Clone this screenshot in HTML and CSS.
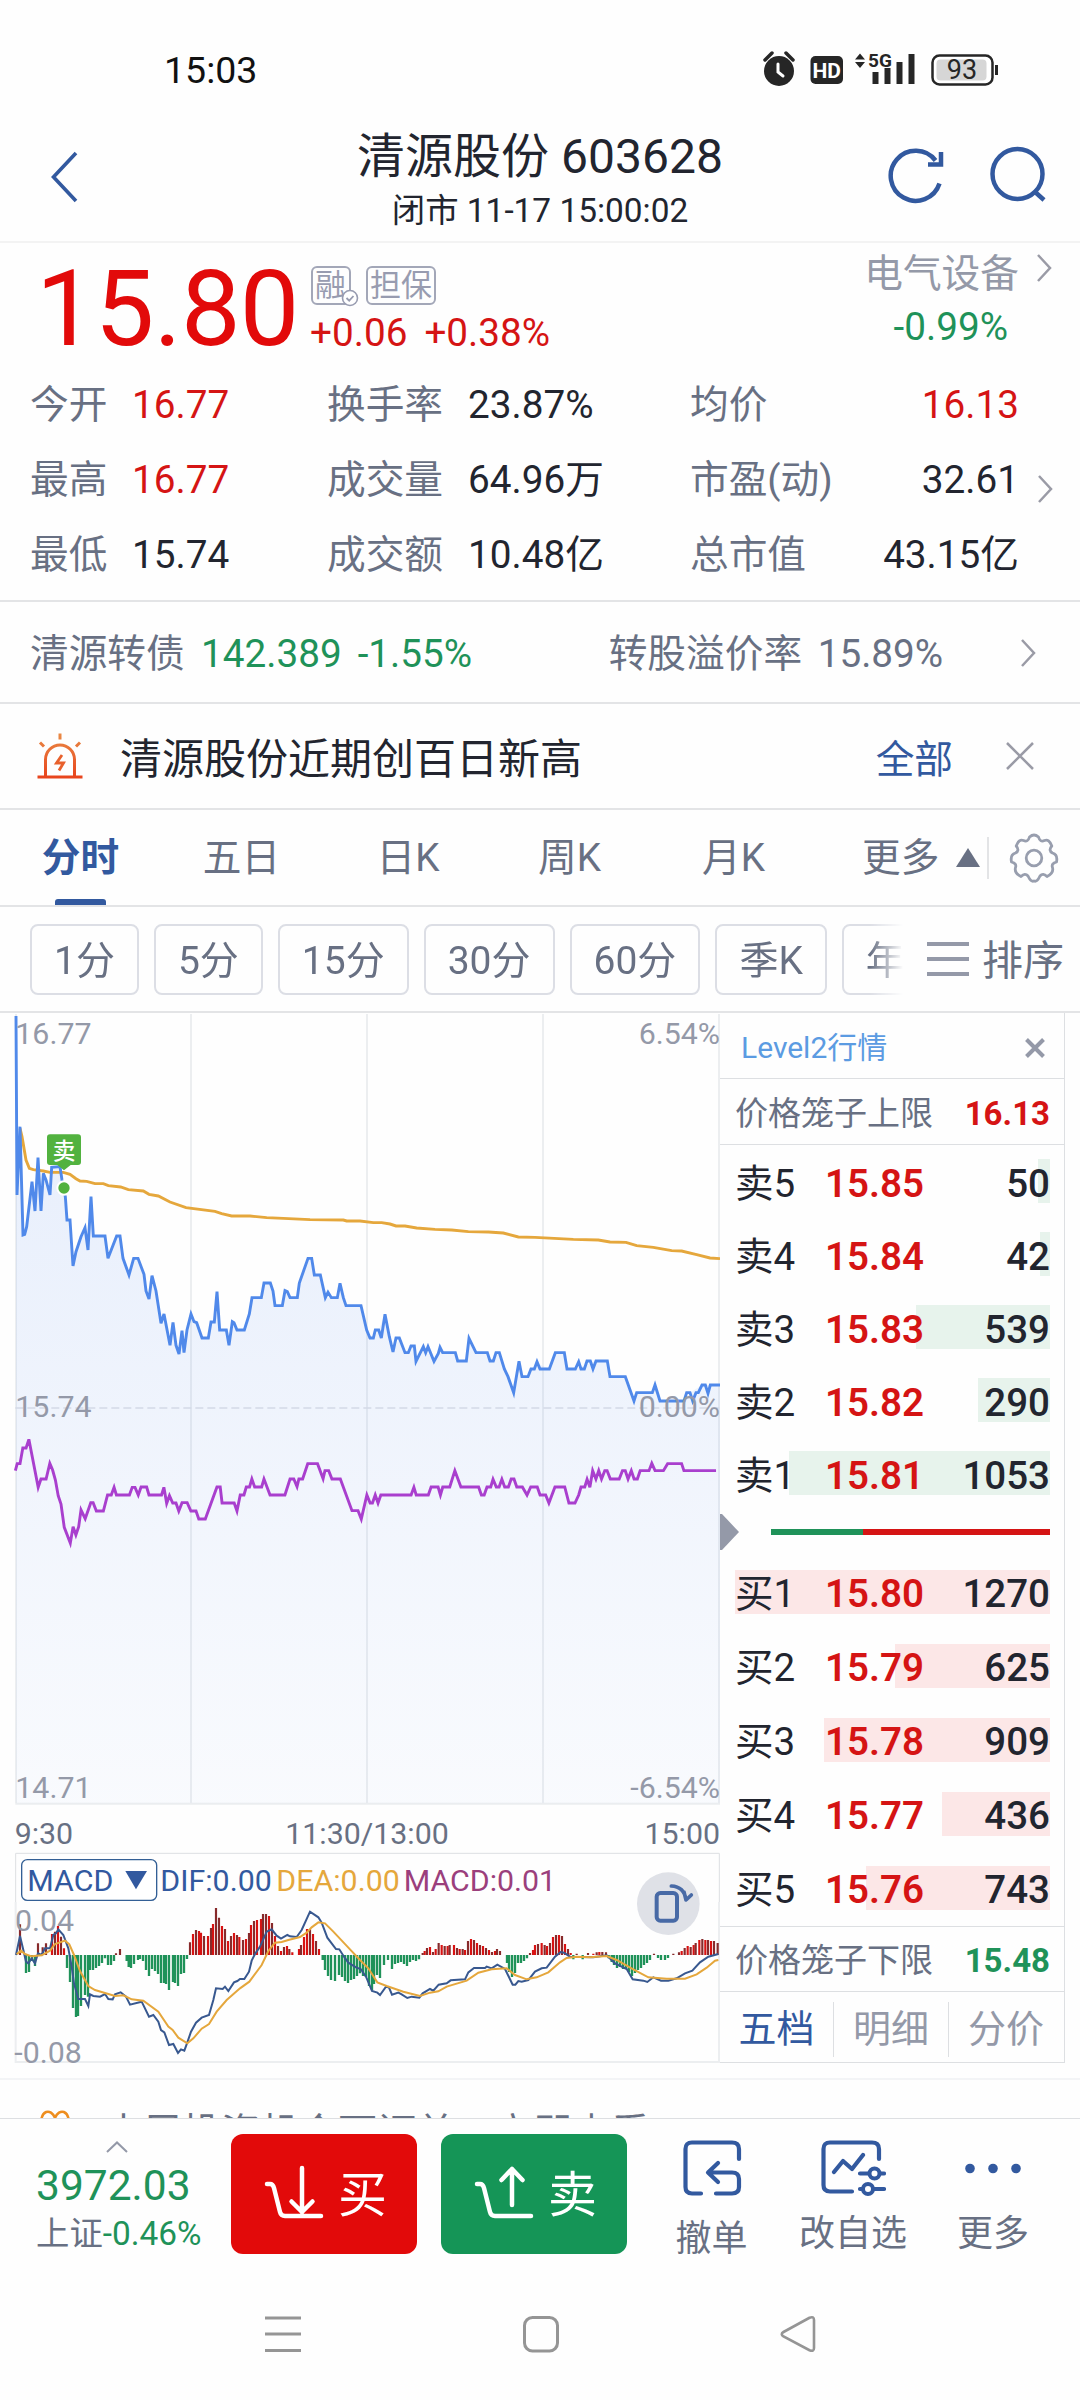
FILE: index.html
```html
<!DOCTYPE html>
<html lang="zh-CN">
<head>
<meta charset="utf-8">
<title>清源股份 603628</title>
<link rel="stylesheet" href="styles.css">
</head>
<body>
<div class="status">
  <span class="clock">15:03</span>
  <svg class="status-icons" viewBox="763 50 236 38" width="236" height="38">
    <circle cx="779" cy="71" r="15" fill="#262626"/>
    <path d="M765 60l7-7M793 60l-7-7" stroke="#262626" stroke-width="3.5" stroke-linecap="round"/>
    <path d="M778 64v8l5 4" stroke="#fff" stroke-width="3" fill="none" stroke-linecap="round"/>
    <rect x="810.500" y="56" width="32.500" height="28" rx="5" fill="#262626"/>
    <text x="826.800" y="77.500" class="hd">HD</text>
    <path d="M855 59.500l5-6 5 6zM855 62l5 6 5-6z" fill="#262626"/>
    <text x="868" y="67" class="fiveg">5G</text>
    <path d="M875.500 72v12M887.500 68v16M899.500 62v22M911.500 54v30" stroke="#262626" stroke-width="6"/>
    <rect x="932.500" y="55.500" width="60" height="29" rx="7" fill="#fff" stroke="#262626" stroke-width="2.500"/>
    <rect x="936.500" y="59.500" width="50" height="21" rx="4" fill="#d6d6d6"/>
    <path d="M996.500 65v10" stroke="#262626" stroke-width="3"/>
    <text x="962" y="79" class="batt">93</text>
  </svg>
</div>

<header class="header">
  <svg class="back" viewBox="0 0 32 54" width="32" height="54"><path d="M27 3L4.500 27L27 51" fill="none" stroke="#32599f" stroke-width="3.600"/></svg>
  <div class="titles">
    <h1>清源股份 603628</h1>
    <p>闭市 11-17 15:00:02</p>
  </div>
  <div class="actions">
    <svg viewBox="0 0 60 60" width="60" height="60"><path d="M53.500 38.500A25 25 0 1 1 49.500 15.500M55 7V19.500H42" fill="none" stroke="#32599f" stroke-width="4.500"/></svg>
    <svg viewBox="0 0 60 60" width="60" height="60"><circle cx="29.500" cy="29" r="25" fill="none" stroke="#32599f" stroke-width="4.500"/><path d="M46 46l10 9" stroke="#32599f" stroke-width="4.500"/></svg>
  </div>
</header>

<section class="quote">
  <div class="price">15.80</div>
  <div class="change">
    <div class="tags">
      <span class="tag margin">融<svg viewBox="0 0 18 18" width="18" height="18"><circle cx="9" cy="9" r="7.500" fill="#fff" stroke="#989cb0" stroke-width="1.600"/><path d="M5.500 9l2.700 2.700L12.500 7" fill="none" stroke="#989cb0" stroke-width="1.800"/></svg></span>
      <span class="tag">担保</span>
    </div>
    <div class="delta"><span>+0.06</span><span>+0.38%</span></div>
  </div>
  <div class="industry">
    <div class="name">电气设备</div>
    <div class="green">-0.99%</div>
  </div>
  <svg class="chev" viewBox="0 0 16 28" width="16" height="28"><path d="M2 1l12 13L2 27" fill="none" stroke="#9a9ba6" stroke-width="2.500"/></svg>
</section>

<section class="stats">
  <dl>
    <dt>今开</dt><dd class="red">16.77</dd><dt>换手率</dt><dd>23.87%</dd><dt>均价</dt><dd class="red end">16.13</dd>
    <dt>最高</dt><dd class="red">16.77</dd><dt>成交量</dt><dd>64.96万</dd><dt>市盈(动)</dt><dd class="end">32.61</dd>
    <dt>最低</dt><dd>15.74</dd><dt>成交额</dt><dd>10.48亿</dd><dt>总市值</dt><dd class="end">43.15亿</dd>
  </dl>
  <svg class="chev" viewBox="0 0 16 28" width="16" height="28"><path d="M2 1l12 13L2 27" fill="none" stroke="#9a9ba6" stroke-width="2.500"/></svg>
</section>

<section class="bond">
  <span class="bond-name">清源转债</span><span class="green">142.389</span><span class="green bond-pct">-1.55%</span>
  <span class="premium">转股溢价率</span><span>15.89%</span>
  <svg class="chev" viewBox="0 0 16 28" width="16" height="28"><path d="M2 1l12 13L2 27" fill="none" stroke="#9a9ba6" stroke-width="2.500"/></svg>
</section>

<section class="alert">
  <svg viewBox="0 0 48 48" width="48" height="48">
    <defs><linearGradient id="siren" x1="0" y1="0" x2="0" y2="1"><stop offset="0" stop-color="#e98a45"/><stop offset="1" stop-color="#e8451d"/></linearGradient></defs>
    <path d="M9.500 45V27.500a14.500 14.500 0 0 1 29 0V45M1.500 45h45M24 1.500v6M4 10.500l4 4M44 10.500l-4 4" fill="none" stroke="url(#siren)" stroke-width="3"/>
    <path d="M26 23l-5.500 8h7L23 38.500" fill="none" stroke="#e8602c" stroke-width="2.800"/>
  </svg>
  <span class="alert-text">清源股份近期创百日新高</span>
  <span class="all">全部</span>
  <svg viewBox="0 0 30 30" width="30" height="30"><path d="M2 2l26 26M28 2L2 28" stroke="#9a9ba6" stroke-width="2.500"/></svg>
</section>

<nav class="tabs">
  <span class="tab on">分时</span><span class="tab">五日</span><span class="tab">日K</span><span class="tab">周K</span><span class="tab month">月K</span>
  <span class="tab more">更多<i></i></span>
  <svg viewBox="-25 -25 50 50" width="50" height="50"><g fill="none" stroke="#989eae" stroke-width="2.800" stroke-linejoin="round"><circle r="7.800"/><path d="M-4.500-21Q0-25 4.500-21Q6-15.500 10.500-17.500Q15-19.500 17.800-12Q14-7.500 18.500-5Q24-3.500 22.500 4Q17 5.500 18.500 9.500Q20 15 13 18.500Q9 14.500 6 18Q3 24.500 0 23Q-3 24.500-6 18Q-9 14.500-13 18.500Q-20 15-18.500 9.500Q-17 5.500-22.500 4Q-24-3.500-18.500-5Q-14-7.500-17.800-12Q-15-19.500-10.500-17.500Q-6-15.500-4.500-21Z"/></g></svg>
</nav>

<div class="periods">
  <div class="chips"><span>1分</span><span>5分</span><span>15分</span><span>30分</span><span>60分</span><span>季K</span><span>年K</span></div>
  <div class="sort"><i></i>排序</div>
</div>

<main class="board">
  <svg class="chart" viewBox="0 39 2160 3201" width="720" height="1067">
    <defs><linearGradient id="area" gradientUnits="userSpaceOnUse" x1="0" y1="500" x2="0" y2="2410"><stop offset="0" stop-color="#4f86ee" stop-opacity=".12"/><stop offset="1" stop-color="#4f86ee" stop-opacity=".03"/></linearGradient></defs>
    <g fill="none" stroke="#eceef0" stroke-width="6">
      <path d="M48 42V2410M573 42V2410M1101 42V2410M1629 42V2410M2157 42V2410M46 2411H2160"/>
      <path d="M47 2706V3186H2157V2706"/>
      <path d="M47 2706V2560H2158V2706" stroke="#dddfe2" stroke-width="3"/>
    </g>
    <path class="fill" fill="url(#area)" d="M48 48L51 585L60 380L69 705L80 680L96 545L105 633L114 473L123 633L130 520L150 585L155 502L180 500L201 660L210 660L219 798L228 755L255 683L264 750L273 590L280 708L315 708L324 775L350 708L360 708L369 775L387 825L401 775L414 775L432 823L447 897L456 827L483 970L492 942L510 1036L519 967L537 1062L546 992L552 1058L573 942L606 1014L625 1014L633 966L643 966L651 875L659 990L679 990L687 1036L697 965L711 990L733 990L748 942L756 893L784 893L792 849L811 849L825 917L847 917L858 873L870 893L892 893L898 849L924 775L935 775L943 825L961 825L976 893L1012 893L1020 850L1038 917L1083 917L1110 1014L1120 1014L1136 990L1155 943L1179 1056L1198 1014L1215 1058L1243 1038L1248 1084L1270 1040L1302 1084L1320 1042L1328 1058L1366 1058L1373 1083L1399 1083L1407 1015L1428 1058L1462 1058L1470 1083L1498 1058L1541 1178L1557 1084L1566 1130L1584 1130L1611 1090L1648 1107L1666 1058L1693 1058L1701 1107L1726 1107L1788 1083L1822 1083L1830 1130L1876 1130L1902 1203L1910 1178L1957 1178L1965 1155L1980 1203L2052 1203L2070 1178L2106 1155L2160 1155V2410H48Z"/>
    <path d="M46 1224H2160" stroke="#d3d9e6" stroke-width="5" stroke-dasharray="24 12"/>
    <polyline class="line" stroke="#e5a73c" points="60,385 66,410 78,480 88,505 100,509 130,513 150,517 190,517 210,523 228,536 240,543 260,544 285,551 310,551 325,557 362,561 385,569 430,573 447,583 475,588 510,606 558,623 645,634 665,641 695,648 750,648 800,653 850,655 930,659 1030,660 1040,663 1080,663 1120,668 1145,668 1170,672 1188,678 1215,678 1250,684 1305,688 1355,690 1405,695 1465,696 1510,699 1555,711 1605,712 1720,718 1795,720 1830,726 1878,727 1910,737 1960,742 2015,752 2045,753 2090,764 2130,774 2160,776"/>
    <polyline class="line" stroke="#5089ea" points="48,48 51,585 60,380 69,705 74,703 80,680 96,545 105,633 114,473 123,633 130,520 138,540 150,585 155,502 180,500 186,540 196,590 201,660 210,660 219,798 228,755 243,710 255,683 264,750 273,590 280,708 315,708 324,775 350,708 360,708 369,775 387,825 401,775 414,775 432,823 438,873 447,897 456,827 468,873 483,970 492,942 510,1036 519,967 528,1036 537,1062 546,992 552,1058 561,990 573,942 582,965 590,968 606,1014 625,1014 633,966 643,966 651,875 659,990 679,990 687,1036 697,965 702,968 711,990 733,990 748,942 756,893 784,893 792,849 811,849 819,873 825,917 847,917 855,872 862,875 870,893 892,893 898,849 924,775 935,775 943,825 961,825 976,893 984,877 994,893 1012,893 1020,850 1030,893 1038,917 1083,917 1100,990 1110,1014 1120,1014 1126,990 1136,990 1144,1014 1155,943 1168,1010 1179,1056 1188,1014 1198,1014 1215,1058 1225,1058 1233,1038 1243,1038 1248,1084 1270,1040 1277,1058 1284,1040 1302,1084 1315,1060 1320,1042 1328,1058 1366,1058 1373,1083 1399,1083 1407,1015 1428,1058 1462,1058 1470,1083 1480,1083 1488,1058 1498,1058 1513,1107 1524,1130 1541,1178 1557,1084 1566,1130 1584,1130 1593,1107 1603,1107 1611,1085 1620,1107 1648,1107 1666,1058 1693,1058 1701,1107 1726,1107 1736,1085 1743,1107 1753,1107 1761,1083 1771,1083 1779,1107 1788,1083 1822,1083 1830,1130 1876,1130 1902,1203 1910,1178 1957,1178 1965,1155 1980,1203 2052,1203 2060,1178 2070,1178 2078,1203 2088,1178 2095,1178 2106,1155 2116,1155 2124,1180 2131,1155 2160,1155"/>
    <g transform="translate(0 1200) scale(1.3967 1)">
      <polyline class="line" stroke="#a93fce" points="33,212 37,191 43,191 49,144 56,144 62,118 82,262 88,237 99,237 107,190 113,210 119,240 125,287 131,312 138,382 151,429 157,380 163,405 169,380 174,330 183,356 195,308 200,308 207,333 222,333 231,285 239,285 245,262 250,285 278,285 284,262 290,262 297,285 303,261 315,261 320,285 347,285 352,262 358,310 364,287 371,309 378,309 384,333 391,308 402,308 410,333 421,333 427,357 441,357 466,261 473,261 477,309 503,309 509,333 516,285 524,285 529,261 536,261 541,237 547,261 562,261 567,237 580,285 612,285 623,237 631,237 638,260 642,237 650,237 661,191 682,191 694,236 698,212 706,212 713,237 731,237 756,332 769,332 776,357 788,285 795,309 800,309 806,285 812,309 818,285 883,285 889,262 894,285 920,285 926,261 941,261 946,285 951,261 966,261 977,212 990,261 1028,261 1034,285 1040,285 1046,261 1054,261 1059,238 1066,261 1072,261 1078,238 1084,261 1092,261 1098,237 1104,237 1110,261 1122,261 1132,285 1140,261 1154,261 1160,285 1172,285 1179,309 1192,261 1213,261 1222,309 1235,309 1243,285 1248,261 1256,261 1261,238 1267,262 1273,212 1280,237 1286,212 1292,237 1299,212 1304,212 1311,237 1330,237 1337,212 1343,212 1349,237 1356,212 1362,237 1369,237 1375,212 1394,212 1400,190 1407,212 1425,212 1434,191 1464,191 1469,212 1538,212"/>
    </g>
    <circle cx="192" cy="564" r="20" fill="#52b23f" stroke="#fff" stroke-width="6"/>
    <path d="M150 403H234Q243 403 243 412V486Q243 495 234 495H212L192 511L172 495H150Q141 495 141 486V412Q141 403 150 403Z" fill="#52b23f"/>
    <text x="192" y="476" class="mark">卖</text>
    <g class="scale"><text x="46" y="132">16.77</text><text x="46" y="1250">15.74</text><text x="46" y="2394">14.71</text></g>
    <g class="scale right"><text x="2160" y="132">6.54%</text><text x="2160" y="1250">0.00%</text><text x="2160" y="2394">-6.54%</text></g>
    <g class="time"><text x="44" y="2532">9:30</text><text x="1101" y="2532" text-anchor="middle">11:30/13:00</text><text x="2160" y="2532" text-anchor="end">15:00</text></g>

    <g class="macd">
      <rect x="65" y="2579" width="405" height="122" rx="17" fill="#fff" stroke="#335f95" stroke-width="4"/>
      <text x="82" y="2673" fill="#32599f">MACD</text>
      <path d="M376 2613H441L408 2668Z" fill="#32599f"/>
      <text x="481" y="2673" fill="#32599f">DIF:0.00</text>
      <text x="829" y="2673" fill="#e5a73c">DEA:0.00</text>
      <text x="1211" y="2673" fill="#9b3f7c">MACD:0.01</text>
    </g>
    <g transform="translate(0 2400)" fill="none" stroke-width="6.500">
      <path stroke="#d81212" d="M156 465V402M174 465V378M192 465V445M579 465V402M597 465V393M603 465V398M624 465V408M639 465V372M666 465V378M684 465V423M702 465V399M718 465V411M738 465V417M753 465V375M771 465V360M783 465V357M807 465V348M825 465V408M843 465V453M861 465V438M877 465V457M897 465V447M912 465V411M921 465V387M939 465V402M957 465V447M1274 465V453M1290 465V441M1307 465V447M1325 465V435M1343 465V438M1362 465V435M1379 465V447M1395 465V450M1413 465V417M1431 465V429M1449 465V438M1467 465V450M1485 465V453M1599 465V450M1605 465V435M1625 465V429M1641 465V438M1659 465V411M1677 465V405M1695 465V432M1712 465V459M1780 465V461M1798 465V456M2045 465V453M2063 465V438M2081 465V435M2098 465V420M2116 465V420M2133 465V423"/>
      <path stroke="#872a2b" d="M60 465V373M114 465V430M128 465V442M138 465V430M165 465V395M183 465V410M348 465V460M360 465V447M570 465V427M588 465V390M612 465V408M633 465V384M648 465V324M657 465V353M675 465V387M693 465V408M711 465V405M729 465V420M747 465V399M762 465V363M789 465V342M798 465V342M816 465V369M834 465V438M852 465V441M868 465V447M903 465V435M930 465V387M948 465V423M1268 465V459M1281 465V444M1299 465V456M1316 465V429M1334 465V438M1349 465V435M1371 465V444M1388 465V447M1404 465V423M1422 465V420M1440 465V435M1458 465V444M1476 465V456M1491 465V447M1500 465V453M1590 465V459M1614 465V432M1634 465V435M1650 465V429M1668 465V405M1686 465V408M1704 465V447M1730 465V461M1764 465V459M1790 465V457M1807 465V456M1818 465V457M1962 465V461M2020 465V461M2037 465V457M2054 465V444M2072 465V441M2087 465V429M2107 465V417M2124 465V420M2142 465V423M2153 465V429"/>
      <path stroke="#1f9259" stroke-width="7" d="M78 465V519M87 465V516M96 465V483M105 465V498M201 465V504M210 465V546M219 465V624M228 465V651M234 465V648M243 465V618M255 465V585M264 465V590M270 465V510M279 465V510M288 465V504M297 465V498M306 465V489M315 465V475M324 465V495M333 465V495M342 465V483M380 465V483M386 465V501M393 465V504M402 465V492M414 465V480M420 465V477M429 465V483M438 465V510M447 465V528M456 465V507M465 465V513M474 465V522M483 465V549M492 465V549M498 465V552M507 465V570M519 465V546M525 465V549M534 465V558M543 465V522M552 465V519M561 465V477M968 465V480M975 465V510M984 465V528M993 465V540M1005 465V543M1017 465V525M1026 465V531M1035 465V543M1044 465V549M1053 465V540M1062 465V537M1071 465V528M1080 465V520M1089 465V528M1098 465V531M1107 465V558M1116 465V570M1122 465V552M1131 465V525M1140 465V534M1152 465V495M1164 465V480M1176 465V507M1185 465V492M1194 465V489M1203 465V486M1212 465V492M1221 465V498M1230 465V486M1239 465V480M1248 465V483M1257 465V478M1521 465V489M1527 465V516M1536 465V531M1545 465V519M1554 465V489M1563 465V489M1572 465V483M1581 465V475M1720 465V478M1748 465V478M1826 465V475M1835 465V486M1842 465V495M1851 465V504M1860 465V501M1869 465V507M1878 465V507M1887 465V516M1896 465V528M1905 465V519M1914 465V510M1923 465V504M1932 465V495M1941 465V489M1950 465V480M1974 465V474M1983 465V480M1995 465V480M2004 465V474"/>
      <polyline class="thin" stroke="#38588f" points="48,465 60,408 70,450 78,485 85,490 95,475 105,490 114,460 125,465 135,445 150,445 160,405 168,400 175,388 190,405 205,445 215,500 222,550 235,597 255,597 265,618 270,583 280,588 300,590 315,582 325,597 338,598 345,583 362,577 378,590 390,614 425,605 447,650 460,645 475,665 483,690 493,697 507,735 520,732 534,759 543,748 553,752 561,730 573,695 588,668 605,653 627,645 640,600 648,565 668,567 675,560 685,573 702,547 712,543 720,537 733,537 747,515 755,482 765,462 780,440 800,395 815,388 830,407 843,416 862,405 870,409 890,411 905,390 930,335 955,352 965,368 982,413 1008,447 1018,448 1032,470 1045,488 1068,502 1082,507 1098,530 1116,573 1132,578 1140,585 1158,560 1167,563 1176,584 1195,578 1205,583 1222,594 1235,590 1258,593 1268,580 1290,567 1300,572 1316,554 1340,550 1352,541 1395,538 1405,517 1422,504 1455,504 1460,500 1475,505 1492,494 1515,507 1538,554 1546,554 1555,543 1565,545 1585,540 1605,515 1625,505 1640,503 1665,470 1682,456 1692,458 1710,470 1780,472 1820,466 1845,490 1880,507 1898,538 1930,542 1942,546 1960,532 1983,542 2005,542 2030,535 2055,520 2077,512 2100,487 2125,470 2155,462"/>
      <polyline class="thin" stroke="#e5a73c" points="50,463 63,452 75,462 95,469 125,466 150,452 165,432 195,422 208,433 222,465 240,513 265,558 285,570 345,588 370,586 395,598 430,602 475,635 505,680 518,690 535,713 562,730 580,715 605,686 627,672 650,635 680,600 720,565 748,545 785,495 805,453 825,428 845,426 865,420 900,411 920,398 935,382 955,367 975,370 1000,395 1050,448 1080,480 1105,505 1132,547 1160,558 1210,575 1260,588 1290,578 1315,574 1340,560 1400,542 1435,518 1475,508 1520,505 1545,525 1580,538 1610,532 1645,517 1680,487 1700,474 1730,470 1770,472 1820,468 1850,480 1900,508 1945,532 2000,536 2055,536 2090,523 2120,503 2145,482 2155,480"/>
    </g>
    <g class="scale"><text x="45" y="2792">0.04</text><text x="43" y="3188">-0.08</text></g>
    <g transform="translate(1080 2400)">
      <circle cx="925" cy="311" r="94" fill="#dfe1e7"/>
      <rect x="890" y="279" width="61" height="83" rx="11" fill="none" stroke="#486aa6" stroke-width="12"/>
      <path d="M934 258C958 259 974 272 978 299M972 276L978 300L994 285" fill="none" stroke="#486aa6" stroke-width="11" stroke-linecap="round" stroke-linejoin="round"/>
    </g>
  </svg>

  <aside class="book">
    <div class="level2">Level2行情<svg viewBox="0 0 20 20" width="20" height="20"><path d="M1.500 1.500l17 17M18.500 1.500l-17 17" stroke="#9499a8" stroke-width="4"/></svg></div>
    <div class="cage"><span>价格笼子上限</span><b class="red">16.13</b></div>
    <ul class="sell">
      <li><i style="width:12px"></i><span>卖5</span><b>15.85</b><em>50</em></li>
      <li><i style="width:10px"></i><span>卖4</span><b>15.84</b><em>42</em></li>
      <li><i style="width:134px"></i><span>卖3</span><b>15.83</b><em>539</em></li>
      <li><i style="width:72px"></i><span>卖2</span><b>15.82</b><em>290</em></li>
      <li><i style="width:261px"></i><span>卖1</span><b>15.81</b><em>1053</em></li>
    </ul>
    <div class="ratio"><svg viewBox="0 0 20 38" width="20" height="38"><path d="M0 1h2L19 19L2 37H0z" fill="#9499a8"/></svg><span></span></div>
    <ul class="buy">
      <li><i style="width:315px"></i><span>买1</span><b>15.80</b><em>1270</em></li>
      <li><i style="width:155px"></i><span>买2</span><b>15.79</b><em>625</em></li>
      <li><i style="width:226px"></i><span>买3</span><b>15.78</b><em>909</em></li>
      <li><i style="width:108px"></i><span>买4</span><b>15.77</b><em>436</em></li>
      <li><i style="width:184px"></i><span>买5</span><b>15.76</b><em>743</em></li>
    </ul>
    <div class="cage low"><span>价格笼子下限</span><b class="green">15.48</b></div>
    <div class="modes"><span class="on">五档</span><span>明细</span><span>分价</span></div>
  </aside>
</main>

<div class="promo">
  <svg viewBox="0 0 32 20" width="32" height="20"><path d="M2 18C1 0 12-1 16 9C20-1 31 0 30 18" fill="none" stroke="#ee8e1f" stroke-width="2.500"/></svg>
  <span>本周投资机会可订单，立即查看</span>
</div>

<footer class="bar">
  <div class="index">
    <svg viewBox="0 0 22 12" width="22" height="12"><path d="M1 11L11 1.500L21 11" fill="none" stroke="#9499a8" stroke-width="2"/></svg>
    <div class="idx">3972.03</div>
    <div class="idx-sub">上证<span class="green">-0.46%</span></div>
  </div>
  <div class="btn btn-buy"><svg viewBox="0 0 60 54" width="60" height="54"><path d="M3 19h3q3 0 4 4l6 24q1 4 5 4h36M38 3v44M27.500 36.500L38 47L48.500 36.500" fill="none" stroke="#fff" stroke-width="4.500" stroke-linecap="round" stroke-linejoin="round"/></svg><span>买</span></div>
  <div class="btn btn-sell"><svg viewBox="0 0 60 54" width="60" height="54"><path d="M3 19h3q3 0 4 4l6 24q1 4 5 4h36M38 40V4M27.500 15L38 4L48.500 15" fill="none" stroke="#fff" stroke-width="4.500" stroke-linecap="round" stroke-linejoin="round"/></svg><span>卖</span></div>
  <div class="act act-cancel">
    <svg viewBox="0 0 60 58" width="60" height="58"><path d="M57 20V10Q57 3.500 50 3.500H10Q3.500 3.500 3.500 10V48Q3.500 54.500 10 54.500H19M34 54.500H50Q57 54.500 57 48V40Q57 33.500 50 33.500H28M36 24L26 33.500L36 43" fill="none" stroke="#32599f" stroke-width="4.200" stroke-linecap="round" stroke-linejoin="round"/></svg>
    <span>撤单</span>
  </div>
  <div class="act">
    <svg viewBox="0 0 66 58" width="66" height="58"><path d="M59 20V10Q59 3.500 52 3.500H10Q3.500 3.500 3.500 10V46Q3.500 52.500 10 52.500H32M14 33L23 22L32 30L43 16M40 34.500H64M40 50H64" fill="none" stroke="#32599f" stroke-width="4.200" stroke-linecap="round" stroke-linejoin="round"/><circle cx="54.500" cy="34.500" r="5" fill="#fff" stroke="#32599f" stroke-width="4"/><circle cx="48" cy="50" r="5" fill="#fff" stroke="#32599f" stroke-width="4"/></svg>
    <span>改自选</span>
  </div>
  <div class="act">
    <svg viewBox="0 0 60 58" width="60" height="58"><g fill="#32599f"><circle cx="7" cy="29.500" r="4.800"/><circle cx="30" cy="29.500" r="4.800"/><circle cx="53" cy="29.500" r="4.800"/></g></svg>
    <span>更多</span>
  </div>
</footer>

<div class="sysnav">
  <svg viewBox="0 0 36 38" width="36" height="38"><path d="M0 3h36M0 19h36M0 35.500h36" stroke="#959595" stroke-width="3"/></svg>
  <svg viewBox="0 0 36 38" width="36" height="38"><rect x="1.500" y="2.500" width="33" height="33.500" rx="8" fill="none" stroke="#959595" stroke-width="3"/></svg>
  <svg viewBox="0 0 36 38" width="36" height="38"><path d="M3.500 17L29.500 2.800Q34 1 34 5V33Q34 37 29.500 35.200L3.500 21.500Q0 19 3.500 17Z" fill="none" stroke="#959595" stroke-width="2.600"/></svg>
</div>
</body>
</html>
```
FILE: styles.css
```css
* { box-sizing: border-box; margin: 0; padding: 0; }
body {
  width: 1080px; height: 2400px; overflow: hidden; background: #fefefe; color: #22252f;
  font: 38.700px/1 Roboto, "Noto Sans CJK SC", sans-serif; white-space: nowrap;
  display: flex; flex-direction: column;
}
svg { display: block; flex: none; }
ul { list-style: none; }
i, em { font-style: normal; }
.red { color: #d51414; }
.green { color: #1f9259; }

.status { height: 92px; flex: none; padding: 48px 81px 0 164px; display: flex; justify-content: space-between; align-items: flex-start; }
.clock { font-size: 37.500px; line-height: 44px; color: #111; }
.status-icons { margin-top: 2px; }
.hd { font: 700 21px Roboto, sans-serif; fill: #fff; text-anchor: middle; }
.fiveg { font: 700 19px Roboto, sans-serif; fill: #262626; }
.batt { font: 27px Roboto, sans-serif; fill: #262626; text-anchor: middle; }

.header { height: 151px; flex: none; border-bottom: 2px solid #f3f3f3; display: grid; grid-template-columns: 240px 1fr 240px; }
.back { margin: 58px 0 0 49px; }
.titles { text-align: center; padding-top: 34px; }
.titles h1 { font-size: 48px; font-weight: 400; line-height: 62px; }
.titles p { font-size: 33.400px; line-height: 46px; }
.actions { display: flex; gap: 42px; padding: 53px 0 0 46px; }

.quote { height: 124px; flex: none; display: flex; padding-left: 36px; }
.price { width: 274px; font-size: 106px; line-height: 133px; color: #e20a0a; letter-spacing: -.7px; }
.change { flex: 1; padding-top: 23px; }
.tags { display: flex; gap: 15px; padding-left: 1px; }
.tag { height: 39px; border: 2px solid #a3a7b8; border-radius: 6px; padding: 0 2px; font-size: 31px; line-height: 35px; color: #989cb0; }
.tag.margin { position: relative; width: 40px; }
.tag.margin svg { position: absolute; right: -10px; bottom: -4px; }
.delta { display: flex; gap: 17px; line-height: 44px; margin-top: 6px; color: #d51414; }
.industry { text-align: right; padding-top: 9px; width: 160px; }
.industry .name { line-height: 44px; color: #9499a8; }
.industry .green { line-height: 44px; margin-top: 9px; padding-right: 11px; }
.quote .chev { margin: 11px 28px 0 17px; }

.stats { height: 235px; flex: none; border-bottom: 2px solid #e3e4e6; display: flex; align-items: flex-start; }
.stats dl { display: grid; grid-template-columns: 102px 195px 141px 222px 160px 169px; grid-auto-rows: 75px; padding: 0 0 0 30px; line-height: 75px; }
.stats dt { color: #687083; }
.stats dd.end { text-align: right; }
.stats .chev { margin: 108px 0 0 18px; }

.bond { height: 102px; flex: none; border-bottom: 2px solid #e3e4e6; display: flex; align-items: center; padding: 4px 0 0 30px; color: #687083; line-height: 96px; }
.bond-name { width: 171px; }
.bond-pct { margin-left: 16px; width: 251px; }
.premium { width: 209px; }
.bond .chev { margin-left: auto; margin-right: 44px; margin-top: -3px; }

.alert { height: 106px; flex: none; border-bottom: 2px solid #e3e4e6; display: flex; align-items: center; padding: 0 45px 0 36px; }
.alert-text { margin-left: 36px; flex: 1; font-size: 42px; padding-top: 8px; }
.all { color: #32599f; margin-right: 52px; padding-top: 8px; }

.tabs { height: 97px; flex: none; border-bottom: 2px solid #e3e4e6; display: grid; grid-template-columns: 161px 161px 172px 151px 163px 181px 50px; align-items: center; color: #687083; line-height: 96px; }
.tab { text-align: center; height: 95px; }
.tab.on { color: #32599f; font-weight: 700; position: relative; }
.tab.on::after { content: ""; position: absolute; left: 55px; bottom: 0; width: 51px; height: 6px; border-radius: 3px 3px 0 0; background: #32599f; }
.tab.month { padding-left: 14px; }
.tab.more { display: flex; align-items: center; padding-left: 54px; position: relative; }
.tab.more i { margin-left: 17px; border: 12px solid transparent; border-top: 0; border-bottom: 19px solid #687083; }
.tab.more::after { content: ""; position: absolute; right: 0; top: 27px; height: 42px; width: 2px; background: #e3e4e6; }
.tabs svg { margin-left: 20px; }

.periods { height: 106px; flex: none; border-bottom: 2px solid #e3e4e6; display: flex; align-items: center; color: #687083; }
.chips { width: 905px; padding-left: 30px; display: flex; gap: 15px; overflow: hidden; font-size: 39px; -webkit-mask-image: linear-gradient(90deg, #000 870px, transparent 903px); mask-image: linear-gradient(90deg, #000 870px, transparent 903px); }
.chips span { flex: none; height: 71px; line-height: 71px; border: 2px solid #dcdee5; border-radius: 8px; padding: 0 22px; }
.sort { display: flex; align-items: center; margin-left: 22px; font-size: 41px; line-height: 52px; padding-top: 3px; }
.sort i { width: 42px; height: 34px; border: solid #9499a8; border-width: 4px 0; margin: -3px 13px 0 0; background: linear-gradient(#9499a8, #9499a8) 0 50% / 100% 4px no-repeat; }

.board { height: 1067px; flex: none; border-bottom: 2px solid #f3f4f6; display: flex; }
.line { fill: none; stroke-width: 2.900px; vector-effect: non-scaling-stroke; stroke-linejoin: miter; }
.thin { stroke-width: 6px; }
.scale, .time, .macd { font: 91px Roboto, sans-serif; }
.scale { fill: #9499a8; }
.scale.right { text-anchor: end; }
.time { fill: #687083; }
.mark { font: 500 68px "Noto Sans CJK SC", sans-serif; fill: #fff; text-anchor: middle; }

.book { width: 345px; height: 1050px; border-right: 1px solid #dddfe2; border-bottom: 1px solid #dddfe2; }
.level2 { height: 66px; border-bottom: 1px solid #dddfe2; display: flex; align-items: center; justify-content: space-between; padding: 4px 19px 0 21px; font-size: 30px; color: #5b9be2; }
.cage { height: 66px; border-bottom: 1px solid #dddfe2; display: flex; align-items: center; justify-content: space-between; padding: 4px 14px 0 15px; font-size: 33px; color: #687083; }
.cage b { font-size: 33px; font-weight: 700; }
.book ul { padding: 0 14px 0 15px; font-size: 38.500px; }
.book li { display: grid; grid-template-columns: 90px 1fr auto; align-items: center; position: relative; height: 73px; }
.book li i { position: absolute; right: 0; top: 14px; height: 44px; background: #e7f3ec; }
.book li span, .book li b, .book li em { position: relative; padding-top: 5px; }
.book li b { font-weight: 600; color: #d51414; }
.book li em { font-weight: 500; }
.ratio { height: 48px; display: flex; align-items: center; margin-top: -2px; }
.ratio span { margin-left: 31px; width: 279px; height: 6px; background: linear-gradient(90deg, #1f9259 92px, #d51414 92px); }
.book .buy { height: 370px; }
.book .buy li { height: 74px; }
.book .buy li i { background: #fce7e7; }
.book .buy li span, .book .buy li b, .book .buy li em { padding-top: 2px; }
.cage.low { border-top: 1px solid #dddfe2; padding-top: 3px; }
.modes { display: grid; grid-template-columns: 113px 115px 115px; height: 71px; padding: 10px 0 8px; text-align: center; line-height: 55px; color: #9499a8; font-size: 38px; }
.modes .on { color: #32599f; }
.modes span + span { border-left: 1px solid #dddfe2; }

.promo { height: 38px; flex: none; overflow: hidden; display: flex; align-items: flex-start; color: #687083; }
.promo svg { margin: 29px 0 0 39px; }
.promo span { margin-left: 33px; font-size: 39px; line-height: 44px; margin-top: 31px; }

.bar { height: 154px; flex: none; border-top: 1px solid #dddfe2; display: grid; grid-template-columns: 231px 186px 210px 169px 114px 166px; }
.index { padding: 22px 0 0 36px; }
.index svg { margin-left: 70px; }
.idx { font-size: 42.500px; line-height: 50px; margin-top: 8px; color: #1f9259; }
.idx-sub { font-size: 33.400px; line-height: 46px; color: #687083; }
.btn { height: 120px; margin-top: 15px; border-radius: 12px; color: #fff; font-size: 49px; display: flex; align-items: center; padding-left: 33px; gap: 14px; }
.btn svg { margin-top: -4px; }
.btn span { padding-top: 3px; }
.btn-buy { background: #e20a0a; }
.btn-sell { background: #159557; margin-left: 24px; }
.act { display: flex; flex-direction: column; align-items: center; padding-top: 20px; font-size: 36px; color: #687083; }
.act span { line-height: 44px; margin-top: 15px; }
.act-cancel span { margin-top: 20px; }

.sysnav { height: 128px; flex: none; display: flex; padding: 43px 264px 0 265px; justify-content: space-between; }
```
